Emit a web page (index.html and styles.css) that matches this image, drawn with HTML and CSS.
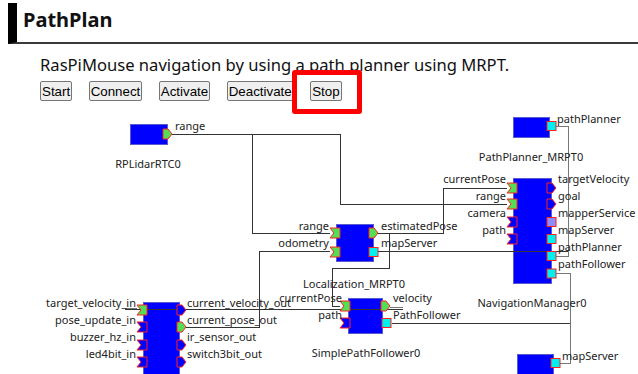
FILE: index.html
```html
<!DOCTYPE html>
<html>
  <head>
    <link rel="stylesheet" href="styles.css">
  </head>
  <body>
    <header class="page-head">
      <h1>PathPlan</h1>
    </header>
    <section class="intro">
      <p class="desc">RasPiMouse navigation by using a path planner using MRPT.</p>
      <div class="toolbar">
        <button>Start</button>
        <button>Connect</button>
        <button>Activate</button>
        <button>Deactivate</button>
        <button>Stop</button>
        <div class="highlight"></div>
      </div>
    </section>
    <svg class="diagram" width="638" height="264" viewBox="0 110 638 264">
      <!-- component bodies -->
      <g class="body">
        <rect x="130" y="124" width="37" height="20" />
        <rect x="513" y="117" width="36" height="20" />
        <rect x="513" y="178" width="38" height="105" />
        <rect x="336" y="224" width="37" height="37" />
        <rect x="348" y="298" width="34" height="35" />
        <rect x="143" y="302" width="36" height="80" />
        <rect x="517" y="354" width="36" height="30" />
      </g>

      <!-- connections -->
      <g class="wire">
        <polyline points="172,134 340,134 340,204 507,204" />
        <polyline points="252,134 252,233 330,233" />
        <polyline points="378,233 443,233 443,188 507,188" />
        <polyline points="389,233 389,268 332,268 332,306 340,306" />
        <polyline points="186,327 259,327 259,251 330,251" />
        <polyline points="378,251 568,251" />
        <polyline points="392,323 570,323" />
        <polyline points="125,309 403,309" />
      </g>
      <g class="wire light">
        <polyline points="556,126 568,126 568,256 556,256" />
        <polyline points="556,273 570,273 570,363 560,363" />
        <polyline points="390,307 403,307" />
        <polyline points="125,308 137,308" />
      </g>

      <!-- ports -->
      <g class="port">
        <polygon class="on" points="163,129 168,129 172,134 168,139 163,139" />
        <rect class="svc" x="547" y="121.5" width="9" height="9" />

        <polygon class="on" points="507,183 517,183 517,193 507,193 511,188" />
        <polygon class="on" points="507,199 517,199 517,209 507,209 511,204" />
        <polygon points="507,217 517,217 517,227 507,227 511,222" />
        <polygon points="507,234 517,234 517,244 507,244 511,239" />
        <polygon points="547,183 552,183 556,188 552,193 547,193" />
        <polygon points="547,199 552,199 556,204 552,209 547,209" />
        <rect class="svc off" x="547" y="217.5" width="9" height="9" />
        <rect class="svc" x="547" y="234.5" width="9" height="9" />
        <rect class="svc" x="547" y="251.5" width="9" height="9" />
        <rect class="svc" x="547" y="269" width="9" height="9" />

        <polygon class="on" points="330,228 340,228 340,238 330,238 334,233" />
        <polygon class="on" points="330,247 340,247 340,257 330,257 334,252" />
        <polygon class="on" points="369,228 374,228 378,233 374,238 369,238" />
        <rect class="svc" x="369" y="247.5" width="9" height="9" />

        <polygon class="on" points="340,301 350,301 350,311 340,311 344,306" />
        <polygon points="340,318 350,318 350,328 340,328 344,323" />
        <polygon class="on" points="381,301 386,301 390,306 386,311 381,311" />
        <rect class="svc" x="382" y="318.5" width="9" height="9" />

        <polygon class="on" points="137,305 147,305 147,315 137,315 141,310" />
        <polygon points="137,322 147,322 147,332 137,332 141,327" />
        <polygon points="137,340 147,340 147,350 137,350 141,345" />
        <polygon points="137,357 147,357 147,367 137,367 141,362" />
        <polygon points="177,305 182,305 186,310 182,315 177,315" />
        <polygon class="on" points="177,322 182,322 186,327 182,332 177,332" />
        <polygon points="177,340 182,340 186,345 182,350 177,350" />
        <polygon points="177,357 182,357 186,362 182,367 177,367" />

        <rect class="svc" x="551" y="358.5" width="9" height="9" />
      </g>

      <!-- port labels -->
      <g class="label">
        <text x="175" y="130">range</text>
        <text x="557" y="123">pathPlanner</text>

        <text x="506" y="183" class="end">currentPose</text>
        <text x="506" y="200" class="end">range</text>
        <text x="506" y="217" class="end">camera</text>
        <text x="506" y="234" class="end">path</text>
        <text x="558" y="183">targetVelocity</text>
        <text x="558" y="200">goal</text>
        <text x="558" y="217">mapperService</text>
        <text x="558" y="234">mapServer</text>
        <text x="558" y="251">pathPlanner</text>
        <text x="558" y="268">pathFollower</text>

        <text x="329" y="230" class="end">range</text>
        <text x="329" y="247" class="end">odometry</text>
        <text x="381" y="230">estimatedPose</text>
        <text x="381" y="247">mapServer</text>

        <text x="342" y="302" class="end">currentPose</text>
        <text x="342" y="319" class="end">path</text>
        <text x="393" y="302">velocity</text>
        <text x="393" y="319">PathFollower</text>

        <text x="136" y="307" class="end">target_velocity_in</text>
        <text x="136" y="324" class="end">pose_update_in</text>
        <text x="136" y="341" class="end">buzzer_hz_in</text>
        <text x="136" y="358" class="end">led4bit_in</text>
        <text x="187" y="307">current_velocity_out</text>
        <text x="187" y="324">current_pose_out</text>
        <text x="187" y="341">ir_sensor_out</text>
        <text x="187" y="358">switch3bit_out</text>

        <text x="562" y="360">mapServer</text>
      </g>

      <!-- component names -->
      <g class="label name">
        <text x="148" y="168">RPLidarRTC0</text>
        <text x="531" y="161">PathPlanner_MRPT0</text>
        <text x="532" y="307">NavigationManager0</text>
        <text x="354" y="288">Localization_MRPT0</text>
        <text x="366" y="357">SimplePathFollower0</text>
      </g>
    </svg>
  </body>
</html>
```

FILE: styles.css
```css
body {
  margin: 0;
  background-color: white;
  color: #111111;
  font-family: "Noto Sans", sans-serif;
  overflow: hidden;
}

.page-head {
  margin: 3px 0 0 8px;
  padding: 3px 0 9px 6px;
  border-left: 9px solid black;
  border-bottom: 2px solid #3a3a3a;
}

.page-head h1 {
  margin: 0;
  font-size: 20px;
  line-height: 27px;
  font-weight: bold;
}

.intro {
  padding-left: 40px;
}

.desc {
  margin: 9px 0 0;
  font-size: 16.6px;
  line-height: 23px;
}

.toolbar {
  position: relative;
  display: flex;
  gap: 16.5px;
  margin-top: 5px;
  height: 20px;
}

.toolbar button {
  height: 20px;
  padding: 0 1px;
  border: 1px solid #767676;
  border-radius: 2px;
  background-color: #efefef;
  color: black;
  font-family: "Liberation Sans", Arial, sans-serif;
  font-size: 13.33px;
}

/* annotation box drawn over the Stop button */
.highlight {
  position: absolute;
  left: 252px;
  top: -11px;
  width: 70px;
  height: 44px;
  box-sizing: border-box;
  border: 5px solid #ff0000;
  border-radius: 3px;
}

.diagram {
  display: block;
  margin-top: 9px;
}

.diagram .body rect {
  fill: #0000ff;
  stroke: #5a5ad0;
  stroke-width: 1;
  shape-rendering: crispEdges;
}

.diagram .wire polyline {
  fill: none;
  stroke: #333333;
  stroke-width: 1;
  shape-rendering: crispEdges;
}

.diagram .wire.light polyline {
  stroke: #777777;
}

.diagram .port polygon,
.diagram .port rect {
  fill: #0000ff;
  stroke: #ff2020;
  stroke-width: 1;
}

.diagram .port .on {
  fill: #55dd55;
}

.diagram .port .svc {
  fill: #00f0f0;
}

.diagram .port .svc.off {
  fill: #8c8cff;
}

.diagram .label text {
  font-family: "Noto Sans", sans-serif;
  font-size: 11px;
  fill: #222222;
}

.diagram .label text.end {
  text-anchor: end;
}

.diagram .name text {
  text-anchor: middle;
}
```
